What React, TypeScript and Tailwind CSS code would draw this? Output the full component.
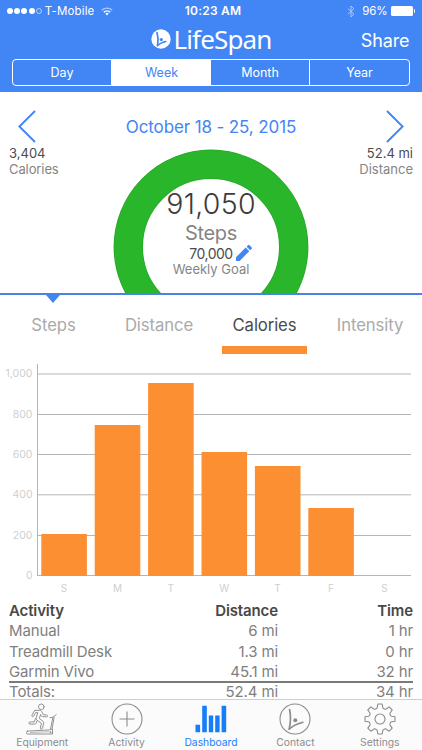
import type { ReactNode } from 'react';

const periods = ['Day', 'Week', 'Month', 'Year'];
const metrics = ['Steps', 'Distance', 'Calories', 'Intensity'];

const days = [
  { label: 'S', top: 534 },
  { label: 'M', top: 425 },
  { label: 'T', top: 383 },
  { label: 'W', top: 452 },
  { label: 'T', top: 466 },
  { label: 'F', top: 508 },
  { label: 'S', top: 576 },
];

const ticks = [
  { label: '1,000', y: 374 },
  { label: '800', y: 414.5 },
  { label: '600', y: 454.5 },
  { label: '400', y: 494.8 },
  { label: '200', y: 535.5 },
  { label: '0', y: 575.5 },
];

const rows = [
  ['Manual', '6 mi', '1 hr'],
  ['Treadmill Desk', '1.3 mi', '0 hr'],
  ['Garmin Vivo', '45.1 mi', '32 hr'],
];

function StatusBar() {
  return (
    <div className="grid h-[22px] grid-cols-[1fr_auto_1fr] items-center px-[7px] text-[11.5px] leading-[22px]">
      <div className="flex items-center">
        <div className="flex gap-[1.2px]">
          {[0, 1, 2, 3].map((i) => (
            <span key={i} className="h-[6px] w-[6px] rounded-full bg-white" />
          ))}
          <span className="h-[6px] w-[6px] rounded-full border-[0.5px] border-white/60" />
        </div>
        <span className="ml-[3px] tracking-[0.15px]">T-Mobile</span>
        <svg className="ml-[7px]" width="12" height="9" viewBox="0 0 12 9" fill="none" stroke="white">
          <path d="M0.8 3.2a7.4 7.4 0 0 1 10.4 0" strokeWidth="1.3" opacity="0.55" />
          <path d="M2.8 5.2a4.6 4.6 0 0 1 6.4 0" strokeWidth="1.5" />
          <path d="M4.3 6.6a2.5 2.5 0 0 1 3.4 0L6 8.4z" fill="white" stroke="none" />
        </svg>
      </div>
      <span className="pl-[4px] text-center text-[12px] font-semibold tracking-[0.2px]">10:23 AM</span>
      <div className="flex items-center justify-end">
        <svg width="8" height="13" viewBox="0 0 8 13" fill="none" stroke="white" strokeWidth="0.9" opacity="0.6">
          <path d="M0.8 3.6l6.2 5.6L4 12V1l3 2.8-6.2 5.6" />
        </svg>
        <span className="ml-[7px] tracking-[-0.1px]">96%</span>
        <span className="ml-[3px] h-[10px] w-[22px] rounded-[1.5px] bg-white" />
        <span className="ml-[1px] h-[4px] w-[1.5px] rounded-r bg-white" />
      </div>
    </div>
  );
}

function Header() {
  return (
    <header className="h-[92px] bg-[#4285f4] text-white">
      <StatusBar />
      <div className="grid h-[37px] grid-cols-[1fr_auto_1fr] items-center pb-[3px] pr-[12.5px]">
        <span />
        <div className="flex items-center gap-[2.5px] pl-[13px]">
          <svg width="20" height="20" viewBox="0 0 20 20">
            <circle cx="10" cy="10" r="9.7" fill="white" />
            <g fill="none" stroke="#4285f4" strokeLinecap="round">
              <path d="M6 3.6c1.2 4 1.4 8 0.5 13" strokeWidth="1.7" />
              <path d="M6.6 16.4c2-2 4.5-3.1 8.3-4" strokeWidth="1.5" />
            </g>
            <circle cx="10.3" cy="10.6" r="1.6" fill="#4285f4" />
          </svg>
          <span className="font-['Noto_Sans'] text-[26px] leading-[34px] tracking-[-0.85px]">LifeSpan</span>
        </div>
        <span className="pt-[3px] text-right text-[18px] leading-6 tracking-[-0.1px]">Share</span>
      </div>
      <div className="mx-[12px] grid h-[27px] grid-cols-4 overflow-hidden rounded-[4px] border border-white text-[12.5px] leading-[25px]">
        {periods.map((p) => (
          <div
            key={p}
            className={
              p === 'Week'
                ? 'bg-white text-center text-[#4285f4]'
                : 'border-r border-white text-center last:border-r-0'
            }
          >
            {p}
          </div>
        ))}
      </div>
    </header>
  );
}

function Chevron({ d }: { d: string }) {
  return (
    <svg width="18" height="33" viewBox="0 0 18 33" fill="none" stroke="#4285f4" strokeWidth="1.9">
      <path d={d} />
    </svg>
  );
}

function Summary() {
  return (
    <section className="relative h-[203px] overflow-hidden border-b-2 border-[#4a83e6]">
      <div className="flex items-start justify-between px-[18px] pt-[18px]">
        <Chevron d="M17 1L1.4 16.5 17 32" />
        <h1 className="pt-[5px] text-[17px] leading-6 tracking-[-0.12px] text-[#4285f4]">October 18 - 25, 2015</h1>
        <Chevron d="M1 1l15.6 15.5L1 32" />
      </div>
      <div className="mt-[2px] flex justify-between px-[9px] text-[13px] leading-[16px] text-[#858585]">
        <div>
          <p className="text-[#4c4c4c]">3,404</p>
          <p className="tracking-[-0.1px]">Calories</p>
        </div>
        <div className="text-right">
          <p className="text-[#4c4c4c]">52.4 mi</p>
          <p>Distance</p>
        </div>
      </div>
      <div className="absolute left-[113px] top-[57px] h-[196px] w-[196px]">
        <svg className="absolute inset-0" width="196" height="196">
          <circle cx="98" cy="98" r="82.7" fill="none" stroke="#27a527" strokeWidth="29.4" />
          <circle cx="98" cy="98" r="82.7" fill="none" stroke="#2ab62b" strokeWidth="28" />
        </svg>
        <div className="relative flex flex-col items-center pt-[38px] text-[#858585]">
          <p className="text-[28.5px] font-light leading-[33px] tracking-[0.3px] text-[#3c3c3c]">91,050</p>
          <p className="pt-px text-[20px] leading-[24px] tracking-[-0.3px]">Steps</p>
          <div className="flex h-[16px] items-center gap-[2px] pl-[20px]">
            <span className="text-[14px] tracking-[-0.5px] text-[#4c4c4c]">70,000</span>
            <svg width="18" height="18" viewBox="0 0 18 18" fill="#4285f4">
              <path d="M1 13.3L10.7 3.6l3.6 3.6L4.6 16.9H1z" />
              <path d="M11.6 2.7l1.5-1.5a1 1 0 0 1 1.4 0l2.2 2.2a1 1 0 0 1 0 1.4l-1.5 1.5z" />
            </svg>
          </div>
          <p className="text-[13px] leading-[16px]">Weekly Goal</p>
        </div>
      </div>
    </section>
  );
}

function MetricTabs() {
  return (
    <nav className="relative grid h-[59px] grid-cols-4 text-center text-[16.7px] leading-6 text-[#aaa]">
      <svg className="absolute left-[46px] top-0" width="14" height="9">
        <path d="M0 0h14L7 8z" fill="#4285f4" />
      </svg>
      {metrics.map((m) => (
        <div key={m} className="flex flex-col items-center pl-[1.5px] pt-[18px]">
          <span className={m === 'Calories' ? 'tracking-[-0.1px] text-[#4a4a4a]' : 'tracking-[-0.1px]'}>{m}</span>
          {m === 'Calories' && <span className="mt-[9px] h-[8px] w-[85px] bg-[#fd8f33]" />}
        </div>
      ))}
    </nav>
  );
}

function CaloriesChart() {
  return (
    <svg className="block" width="422" height="246" viewBox="0 354 422 246">
      {ticks.map((t, i) => (
        <g key={t.label}>
          <path d={`M37 ${t.y}H411`} stroke={i === 0 ? '#dadada' : '#b5b5b5'} strokeWidth={i === 0 ? 2 : 1} />
          <text x="32.5" y={t.y + 3.4} textAnchor="end" fontSize="10.5" fill="#cfcfcf">
            {t.label}
          </text>
        </g>
      ))}
      <path d="M37.5 364v212" stroke="#b5b5b5" />
      {days.map((d, i) => (
        <g key={i}>
          <rect x={41.3 + i * 53.4} y={d.top} width="45.6" height={576 - d.top} fill="#fd8f33" />
          <text x={64 + i * 53.4} y="591.7" textAnchor="middle" fontSize="10" fill="#cfcfcf">
            {d.label}
          </text>
        </g>
      ))}
    </svg>
  );
}

function Cells({ cells }: { cells: string[] }) {
  return (
    <div className="grid grid-cols-[150px_1fr_135px]">
      <span>{cells[0]}</span>
      <span className="text-right">{cells[1]}</span>
      <span className="text-right">{cells[2]}</span>
    </div>
  );
}

function ActivityTable() {
  return (
    <section className="h-[99px] px-[9px] pt-[0.8px] text-[15px] leading-[20.4px] tracking-[-0.12px] text-[#808080]">
      <div className="font-semibold text-[#484848]">
        <Cells cells={['Activity', 'Distance', 'Time']} />
      </div>
      {rows.map((r) => (
        <Cells key={r[0]} cells={r} />
      ))}
      <div className="-mt-[1.4px] border-t-2 border-[#7a7a7a] leading-[17px]">
        <Cells cells={['Totals:', '52.4 mi', '34 hr']} />
      </div>
    </section>
  );
}

function TreadmillIcon() {
  return (
    <svg width="32" height="32" viewBox="0 0 32 32" fill="none" stroke="#8c8c8c" strokeWidth="0.95" strokeLinejoin="round" strokeLinecap="round">
      <circle cx="15.3" cy="3.8" r="2.8" />
      {/* torso and arms */}
      <path d="M9.3 7.4h4.2c1.4 0 2.2 0.7 2.6 1.8l1.1 2.4 3.5 0.4c1.2 0.2 1.1 2-0.1 1.9l-4.2-0.4c-0.7-0.1-1-0.4-1.3-1l-0.5-1-1.3 4 3.7 2.8c0.7 0.5 0.9 1 0.7 1.8l-1.3 5.4c-0.4 1.3-2.4 0.9-2.1-0.5l1.1-4.7-4.2-3c-1-0.7-1.3-1.6-0.9-2.8l1.5-4.9H9.6l-2 3.6c-0.7 1-2.3 0.3-1.7-0.9l2.2-4.2c0.3-0.5 0.7-0.7 1.2-0.7z" />
      {/* trailing leg */}
      <path d="M9.4 15.7l-1.2 3.3H3.9c-1.4 0-1.4 2.1 0 2.1h4.9c0.7 0 1.1-0.3 1.3-0.9l0.9-2.3" />
      <path d="M24.4 26.6l2.5-12.3 3.3-2.7M26 26.2l2.1-11.6M24 14.6l2.9-0.3" />
      <path d="M1.6 28.1l22.2-1.2 1.8-0.9h0.9v5H1.8a1.3 1.3 0 0 1-0.2-2.9z" />
      <path d="M4.5 29.5l18.5-0.8" strokeWidth="0.6" />
      <circle cx="24.4" cy="29.2" r="0.5" />
    </svg>
  );
}

function PlusIcon() {
  return (
    <svg width="32" height="32" viewBox="0 0 32 32" fill="none" stroke="#8c8c8c" strokeWidth="1.1">
      <circle cx="16" cy="16" r="15" />
      <path d="M8.5 16h15M16 8.5v15" />
    </svg>
  );
}

function BarsIcon() {
  return (
    <svg width="32" height="32" viewBox="0 0 32 32" fill="#157efb">
      <path d="M0.5 21.7h4.6v7.5H0.5zM7.2 2.7h4.6v26.5H7.2zM13.8 12.5h4.4v16.7h-4.4zM20.2 12.5h4.4v16.7h-4.4zM26.6 2.7h4.6v26.5h-4.6z" />
    </svg>
  );
}

function ContactIcon() {
  return (
    <svg width="32" height="32" viewBox="0 0 32 32" fill="none" stroke="#8c8c8c" strokeLinecap="round">
      <circle cx="16" cy="16" r="15" strokeWidth="1.1" />
      <path d="M10.6 6.7c1.3 6 1.3 12-0.4 19.5" strokeWidth="1.7" />
      <path d="M10.2 26.2c3-3.4 7.5-5.2 13.8-7" strokeWidth="1.5" />
      <circle cx="16.3" cy="17.2" r="2" fill="#8c8c8c" stroke="none" />
    </svg>
  );
}

// eight teeth, each one a flat tip joined by rounded valleys
function GearIcon() {
  return (
    <svg width="32" height="32" viewBox="0 0 32 32" fill="none" stroke="#8c8c8c" strokeWidth="1.1" strokeLinejoin="round">
      <circle cx="16" cy="16" r="5" />
      <path d="M13.8 1h4.4l0.6 3.6q0.2 0.8 1 1.1l0.9 0.4q0.7 0.3 1.4-0.1l3-2.1 3.1 3.1-2.1 3q-0.4 0.7-0.1 1.4l0.4 0.9q0.3 0.8 1.1 1l3.5 0.5v4.4l-3.5 0.6q-0.8 0.2-1.1 1l-0.4 0.9q-0.3 0.7 0.1 1.4l2.1 3-3.1 3.1-3-2.1q-0.7-0.4-1.4-0.1l-0.9 0.4q-0.8 0.3-1 1.1L18.2 31h-4.4l-0.6-3.5q-0.2-0.8-1-1.1l-0.9-0.4q-0.7-0.3-1.4 0.1l-3 2.1-3.1-3.1 2.1-3q0.4-0.7 0.1-1.4l-0.4-0.9q-0.3-0.8-1.1-1L1 18.2v-4.4l3.5-0.5q0.8-0.2 1.1-1l0.4-0.9q0.3-0.7-0.1-1.4l-2.1-3 3.1-3.1 3 2.1q0.7 0.4 1.4 0.1l0.9-0.4q0.8-0.3 1-1.1z" />
    </svg>
  );
}

function TabItem({ label, active, children }: { label: string; active?: boolean; children: ReactNode }) {
  return (
    <div className={active ? 'flex flex-col items-center text-[#157efb]' : 'flex flex-col items-center text-[#8c8c8c]'}>
      {children}
      <span className="mt-[1px] text-[10.3px] leading-[13px]">{label}</span>
    </div>
  );
}

function TabBar() {
  return (
    <footer className="grid h-[51px] grid-cols-5 border-t border-[#cfcfcf] bg-[#fbfbfb] pt-[3px]">
      <TabItem label="Equipment"><TreadmillIcon /></TabItem>
      <TabItem label="Activity"><PlusIcon /></TabItem>
      <TabItem label="Dashboard" active><BarsIcon /></TabItem>
      <TabItem label="Contact"><ContactIcon /></TabItem>
      <TabItem label="Settings"><GearIcon /></TabItem>
    </footer>
  );
}

export default function App() {
  return (
    <div className="flex h-[750px] w-[422px] flex-col overflow-hidden bg-white font-[Inter,'Liberation_Sans',sans-serif]">
      <Header />
      <Summary />
      <MetricTabs />
      <CaloriesChart />
      <ActivityTable />
      <TabBar />
    </div>
  );
}
